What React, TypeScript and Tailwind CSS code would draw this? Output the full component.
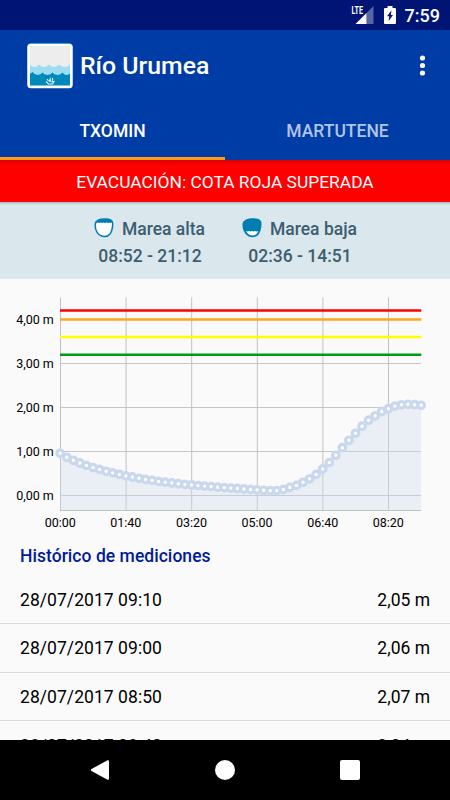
const levels = [
    453.3, 457.3, 460.3, 463, 465.4, 467.6, 469.4, 471.3, 472.9, 474.4, 475.9, 477, 478.3, 479.5, 480.4, 481.4,
    482.2, 483, 483.7, 484.4, 485, 485.6, 486.1, 486.6, 487.2, 487.6, 488.1, 488.5, 489, 489.5, 489.9, 490.3,
    490.6, 490.6, 489.5, 487.5, 485.4, 482.3, 478.8, 474.4, 469, 462.6, 455.3, 447.7, 440.3, 433.3, 426.2, 420.2,
    415.8, 411.5, 408.7, 406.1, 404.8, 404.3, 404.7, 405.3,
];

const points = levels.map((y, i) => ({ x: 60.2 + i * 6.563, y }));

const xLabels = ['00:00', '01:40', '03:20', '05:00', '06:40', '08:20'];

const yLabels = [
    { label: '4,00 m', y: 319.5 },
    { label: '3,00 m', y: 363.5 },
    { label: '2,00 m', y: 407.5 },
    { label: '1,00 m', y: 451.5 },
    { label: '0,00 m', y: 495.5 },
];

const limits = [
    { color: '#ff0000', y: 310.6 },
    { color: '#ffa51d', y: 319.4 },
    { color: '#ffff00', y: 337 },
    { color: '#009b0f', y: 354.7 },
];

const measurements = [
    { date: '28/07/2017 09:10', value: '2,05 m' },
    { date: '28/07/2017 09:00', value: '2,06 m' },
    { date: '28/07/2017 08:50', value: '2,07 m' },
    { date: '28/07/2017 08:40', value: '2,04 m' },
];

function StatusBar() {
    return (
        <div className="flex h-[30px] items-center justify-end bg-[#001475] pr-[10px] text-white">
            <svg width="23" height="20" viewBox="0 0 23 20" className="mr-[10px]">
                <text x="0.500" y="9" fontSize="10.5" fontWeight="700" textLength="11.5" lengthAdjust="spacingAndGlyphs" fill="#fff">LTE</text>
                <path d="M22.500 1v18H15.500V8z" fill="#fff" fillOpacity="0.35" />
                <path d="M4.500 19 15.500 8v11z" fill="#fff" />
            </svg>
            <svg width="12" height="18" viewBox="0 0 12 18" className="mr-[9px]">
                <path d="M1 2h2.500V0h5v2H11q1 0 1 1v14q0 1-1 1H1q-1 0-1-1V3q0-1 1-1z" fill="#fff" />
                <path d="M7.500 4.200 3 10.300H5.300L4.500 15.300 9 8.900H6.800z" fill="#001475" />
            </svg>
            <span className="pt-[2px] text-[18px] leading-7 font-medium">7:59</span>
        </div>
    );
}

function AppLogo() {
    return (
        <svg width="46" height="46" viewBox="0 0 46 46">
            <rect x="0.300" y="0" width="45.400" height="44" rx="4" fill="#0087bd" />
            <rect x="0.300" y="0.800" width="45.400" height="44.500" rx="3.500" fill="#fff" />
            <rect x="3" y="3" width="40" height="39.500" fill="#ededed" />
            <path d="M3 22q3 2.500 5.500 2 2-.5 3.500-2.500 1.500 2 5 2.500 3.500-.5 5-2.500 1.500 2 5 2.500 3.500-.5 5-2.500 1.500 2 5 2.500 4 0 6-2V34H3z" fill="#9ddcf3" />
            <path d="M3 30.500q1.500-.2 2.500-1.500 1.500 2.500 5 3 3.500-.5 5-2.500 1.500 2 5 2.500 3.500-.5 5-2.500 1.500 2 5 2.500 3.500-.5 5-2.500 1.500 2 3.500 2.500 2.500 0 4-1.500V42.500H3z" fill="#008abb" />
            <path d="m23.500 34-2 4.500 2.500.5zM25 34.500l.5 4 .8-2z" fill="#e2f4fa" />
            <path d="M19 38.500l2.500 2.500h4l1.500-2.500-3 .5M20 36l1.500 2M25.500 35v4" fill="none" stroke="#e2f4fa" strokeWidth="1.100" />
        </svg>
    );
}

function Header() {
    return (
        <header className="bg-[#003ca5] text-white">
            <div className="flex h-[71px] items-center pr-[25px] pl-[27px]">
                <AppLogo />
                <h1 className="ml-[7px] flex-1 pt-px text-[24.8px] leading-[30px] font-medium">Río Urumea</h1>
                <svg width="6" height="22" viewBox="0 0 6 22">
                    <circle cx="3.500" cy="3" r="2.600" fill="#fff" />
                    <circle cx="3.500" cy="10.500" r="2.600" fill="#fff" />
                    <circle cx="3.500" cy="18" r="2.600" fill="#fff" />
                </svg>
            </div>
            <div className="grid h-[59px] grid-cols-2 text-center text-[17.5px] leading-[34px] font-medium">
                <div className="border-b-[3px] border-[#ff9e16] pt-[13px]">TXOMIN</div>
                <div className="pt-[13px] text-[#b2c4e4]">MARTUTENE</div>
            </div>
        </header>
    );
}

function HighTideIcon() {
    return (
        <svg width="20" height="20" viewBox="0 0 20 20" className="mb-[3px]">
            <path d="M1.200 6C1.500 2.500 6 1 11 1c5.500 0 7.700 1.500 7.700 4.500 0 4.500-1 8-2.700 10.500-1.500 2-3 2.500-5.500 2.500C4 18.500.8 12.500 1.200 6z" fill="#fff" stroke="#007db1" strokeWidth="1.500" />
            <path d="M1.200 6C1.500 2.500 6 1 11 1c4.500 0 6.900 1 7.500 3l-1.500.9-1.500-.5-1.500.5-1.500-.5-1.500.5-1.500-.5-1.500.5-1.500-.5-1.500.5-1.500-.5z" fill="#007db1" />
        </svg>
    );
}

function LowTideIcon() {
    return (
        <svg width="20" height="20" viewBox="0 0 20 20" className="mb-[3px]">
            <path d="M.5 6C.8 2 6 .3 11 .3c6 0 8.500 1.700 8.500 5.200 0 5-1.200 8.500-3 11-1.500 2-3.300 2.700-6 2.700C4 19.200.1 12.500.5 6z" fill="#007db1" />
            <path d="m3.800 13 1.600.6 1.500-.6 1.500.6 1.500-.6 1.500.6 1.500-.6 1.500.6 1.800-.6q-1.500 4.500-5.500 4.500-4 0-6.900-4.500z" fill="#fff" />
        </svg>
    );
}

function Tides() {
    return (
        <div className="flex h-[77px] justify-center gap-[37px] bg-[#dae7ed] pt-[14px] pl-px text-[17.5px] leading-[27.4px] font-medium text-[#3d5e70]">
            <div className="w-[111px] text-center whitespace-nowrap">
                <div className="flex items-center justify-between">
                    <HighTideIcon />
                    <span>Marea alta</span>
                </div>
                <div className="pl-px">08:52 - 21:12</div>
            </div>
            <div className="w-[115px] text-center whitespace-nowrap">
                <div className="flex items-center justify-between">
                    <LowTideIcon />
                    <span>Marea baja</span>
                </div>
                <div className="pl-px">02:36 - 14:51</div>
            </div>
        </div>
    );
}

function LevelChart() {
    const line = points.map((p) => `${p.x},${p.y}`).join(' ');

    return (
        <svg width="450" height="256" viewBox="0 279 450 256" className="block">
            {/* Grid */}
            {yLabels.map(({ label, y }) => (
                <g key={label}>
                    <path d={`M60 ${y}H421`} stroke="#c6c6c6" />
                    <text x="53.800" y={y + 4} textAnchor="end" fontSize="12.5" fill="#000">{label}</text>
                </g>
            ))}
            {xLabels.map((label, i) => (
                <g key={label}>
                    <path d={`M${60.5 + i * 65.6} 297.500V510`} stroke="#c2c2c2" />
                    <text x={60.2 + i * 65.63} y="526.700" textAnchor="middle" fontSize="12.5" fill="#000">{label}</text>
                </g>
            ))}
            <path d="M60 510.500H421" stroke="#c2c2c2" />

            {/* Water level */}
            <polygon points={`60.200,510 ${line} 421.200,510`} fill="#cddaef" fillOpacity="0.36" />
            <polyline points={line} fill="none" stroke="#cad8ee" strokeWidth="3" />
            {points.map((p) => (
                <circle key={p.x} cx={p.x} cy={p.y} r="3.300" fill="#fff" stroke="#cad8ee" strokeWidth="3.200" />
            ))}

            {/* Alert limits */}
            {limits.map(({ color, y }) => (
                <path key={color} d={`M60 ${y}H421.300`} stroke={color} strokeWidth="2.500" />
            ))}
        </svg>
    );
}

function NavBar() {
    return (
        <div className="flex h-[60px] items-center justify-center gap-[105px] bg-black">
            <svg width="20" height="20" viewBox="0 0 20 20">
                <path d="M1.500 9 17.500.3q1.500-.6 1.500 1v17.400q0 1.600-1.500 1L1.500 11q-1.500-1 0-2z" fill="#fff" />
            </svg>
            <div className="size-5 rounded-full bg-white" />
            <div className="size-5 rounded-[2px] bg-white" />
        </div>
    );
}

export default function App() {
    return (
        <div className="flex h-[800px] w-[450px] flex-col overflow-hidden bg-[#fafafa] font-[Roboto,sans-serif] text-black">
            <StatusBar />
            <Header />
            <div className="h-[42px] bg-[#ff0000] bg-linear-to-b from-[#d90000] to-[#ff0000] to-[5px] pt-px text-center text-[17.4px] leading-[42px] text-white">
                EVACUACIÓN: COTA ROJA SUPERADA
            </div>
            <div className="h-[77px] bg-[#dae7ed]">
                <Tides />
                <div className="relative -top-[77px] h-[3px] bg-linear-to-b from-[#b0b6bb] to-[#dae7ed]" />
            </div>
            <LevelChart />
            <div className="flex min-h-0 flex-1 flex-col overflow-hidden">
                <h2 className="h-10 shrink-0 px-5 pt-2 text-[17.5px] leading-[27px] font-medium tracking-[0.04px] text-[#001a9c]">
                    Histórico de mediciones
                </h2>
                {measurements.map(({ date, value }) => (
                    <div
                        key={date}
                        className="flex h-[48.75px] shrink-0 items-center justify-between border-b border-[#dadada] px-5 pt-[1.5px] text-[17.5px]"
                    >
                        <span className="tracking-[0.06px]">{date}</span>
                        <span>{value}</span>
                    </div>
                ))}
            </div>
            <NavBar />
        </div>
    );
}
